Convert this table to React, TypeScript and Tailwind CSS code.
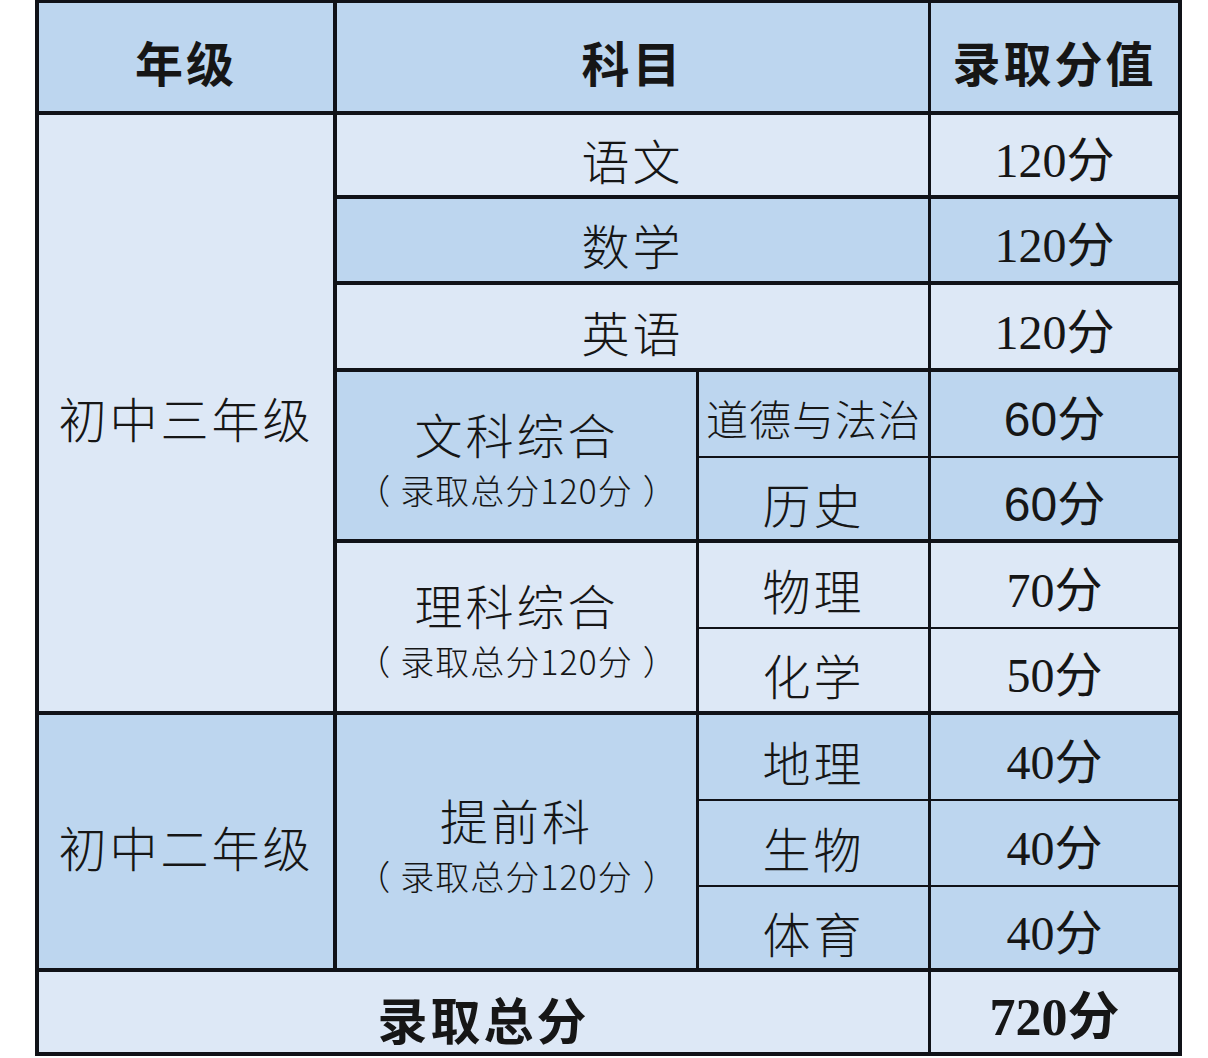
import type {ReactNode} from 'react';

// 行高/列宽按截图量出的像素来
const cjk = {fontFamily: '"Noto Sans CJK SC", "Noto Sans", sans-serif'};

function Cell({className, children}: {className: string; children?: ReactNode}) {
  return (
    <div className={`flex flex-col items-center justify-center border-[#101218] text-[#161616] ${className}`}>
      {children}
    </div>
  );
}

function Score({value, sans}: {value: string; sans?: boolean}) {
  return (
    <span
      className="text-[48px] leading-none pt-3"
      style={{
        fontFamily: sans
          ? '"Liberation Sans", "Noto Sans CJK SC", sans-serif'
          : '"Liberation Serif", "Noto Sans CJK SC", serif'
      }}
    >
      {value}
    </span>
  );
}

function Subject({children, small}: {children: ReactNode; small?: boolean}) {
  return (
    <span
      className={`${small ? 'text-[42px] tracking-[1px]' : 'text-[48px] tracking-[3px]'} font-light leading-none pt-2`}
      style={cjk}
    >
      {children}
    </span>
  );
}

function Group({title}: {title: string}) {
  return (
    <div className="flex flex-col items-center gap-[4px] pt-1 font-light" style={cjk}>
      <span className="text-[48px] leading-[60px] tracking-[3px]">{title}</span>
      <span className="flex items-center gap-[10px] text-[34px] leading-[46px]">
        <span>（</span>
        <span className="tracking-[1px]">录取总分120分</span>
        <span>）</span>
      </span>
    </div>
  );
}

export default function App() {
  const light = 'bg-[#dde8f6]';
  const mid = 'bg-[#bdd6ef]';

  return (
    <div className="min-h-screen bg-white">
      <div className="ml-[35px] grid w-[1147px] grid-cols-[298px_362px_232px_251px] grid-rows-[112px_84px_86px_87px_86px_85px_86px_86px_86px_86px_85px_84px] border-l-4 border-t-[3px] border-[#101218]">
        {/* 表头 */}
        <Cell className={`${mid} border-r-4 border-b-4`}>
          <span className="text-[48px] font-bold leading-none pt-2 tracking-[3px]" style={cjk}>年级</span>
        </Cell>
        <Cell className={`${mid} col-span-2 border-r-[3px] border-b-4`}>
          <span className="text-[48px] font-bold leading-none pt-2 tracking-[3px]" style={cjk}>科目</span>
        </Cell>
        <Cell className={`${mid} border-r-4 border-b-4`}>
          <span className="text-[48px] font-bold leading-none pt-2 tracking-[3px]" style={cjk}>录取分值</span>
        </Cell>

        {/* 初中三年级 */}
        <Cell className={`${light} row-span-7 border-r-4 border-b-4`}>
          <Subject>初中三年级</Subject>
        </Cell>
        <Cell className={`${light} col-span-2 border-r-[3px] border-b-4`}>
          <Subject>语文</Subject>
        </Cell>
        <Cell className={`${light} border-r-4 border-b-4`}>
          <Score value="120分" />
        </Cell>

        <Cell className={`${mid} col-span-2 border-r-[3px] border-b-4`}>
          <Subject>数学</Subject>
        </Cell>
        <Cell className={`${mid} border-r-4 border-b-4`}>
          <Score value="120分" />
        </Cell>

        <Cell className={`${light} col-span-2 border-r-[3px] border-b-4`}>
          <Subject>英语</Subject>
        </Cell>
        <Cell className={`${light} border-r-4 border-b-4`}>
          <Score value="120分" />
        </Cell>

        <Cell className={`${mid} row-span-2 border-r-[3px] border-b-4`}>
          <Group title="文科综合" />
        </Cell>
        <Cell className={`${mid} border-r-[3px] border-b-2`}>
          <Subject small>道德与法治</Subject>
        </Cell>
        <Cell className={`${mid} border-r-4 border-b-2`}>
          <Score value="60分" sans />
        </Cell>
        <Cell className={`${mid} border-r-[3px] border-b-4`}>
          <Subject>历史</Subject>
        </Cell>
        <Cell className={`${mid} border-r-4 border-b-4`}>
          <Score value="60分" sans />
        </Cell>

        <Cell className={`${light} row-span-2 border-r-[3px] border-b-4`}>
          <Group title="理科综合" />
        </Cell>
        <Cell className={`${light} border-r-[3px] border-b-2`}>
          <Subject>物理</Subject>
        </Cell>
        <Cell className={`${light} border-r-4 border-b-2`}>
          <Score value="70分" />
        </Cell>
        <Cell className={`${light} border-r-[3px] border-b-4`}>
          <Subject>化学</Subject>
        </Cell>
        <Cell className={`${light} border-r-4 border-b-4`}>
          <Score value="50分" />
        </Cell>

        {/* 初中二年级 */}
        <Cell className={`${mid} row-span-3 border-r-4 border-b-4`}>
          <Subject>初中二年级</Subject>
        </Cell>
        <Cell className={`${mid} row-span-3 border-r-[3px] border-b-4`}>
          <Group title="提前科" />
        </Cell>
        <Cell className={`${mid} border-r-[3px] border-b-2`}>
          <Subject>地理</Subject>
        </Cell>
        <Cell className={`${mid} border-r-4 border-b-2`}>
          <Score value="40分" />
        </Cell>
        <Cell className={`${mid} border-r-[3px] border-b-2`}>
          <Subject>生物</Subject>
        </Cell>
        <Cell className={`${mid} border-r-4 border-b-2`}>
          <Score value="40分" />
        </Cell>
        <Cell className={`${mid} border-r-[3px] border-b-4`}>
          <Subject>体育</Subject>
        </Cell>
        <Cell className={`${mid} border-r-4 border-b-4`}>
          <Score value="40分" />
        </Cell>

        {/* 合计 */}
        <Cell className={`${light} col-span-3 border-r-[3px] border-b-4`}>
          <span className="text-[50px] font-bold leading-none pt-3 tracking-[3px]" style={cjk}>录取总分</span>
        </Cell>
        <Cell className={`${light} border-r-4 border-b-4`}>
          <span
            className="text-[52px] font-bold leading-none pt-3"
            style={{fontFamily: '"Liberation Serif", "Noto Sans CJK SC", serif'}}
          >
            720分
          </span>
        </Cell>
      </div>
    </div>
  );
}
